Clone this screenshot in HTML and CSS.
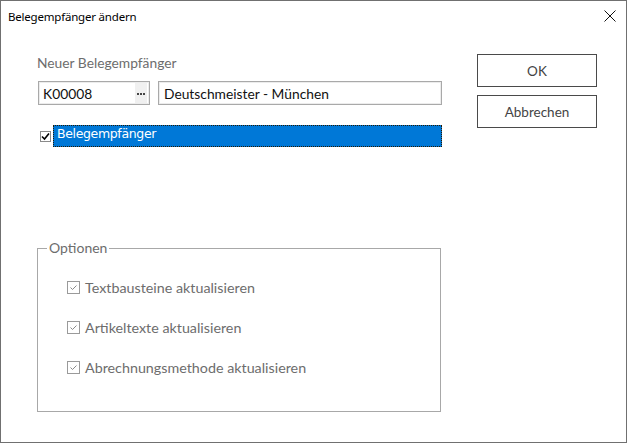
FILE: index.html
```html
<!DOCTYPE html>
<html lang="de">
<head>
<meta charset="utf-8">
<title>Belegempfänger ändern</title>
<link rel="stylesheet" href="styles.css">
</head>
<body>
<div class="window">
  <div class="titlebar">
    <span class="title">Belegempfänger ändern</span>
    <span class="close">
      <svg width="12" height="12" viewBox="0 0 12 12"><path d="M0.5 0.5 L11.5 11.5 M11.5 0.5 L0.5 11.5" stroke="#111" stroke-width="1" fill="none"/></svg>
    </span>
  </div>
  <div class="main">
    <div class="left">
      <div class="label">Neuer Belegempfänger</div>
      <div class="inputs">
        <div class="field code">
          <span class="value">K00008</span>
          <span class="dots"><i></i><i></i><i></i></span>
        </div>
        <div class="field name"><span class="value">Deutschmeister - München</span></div>
      </div>
      <div class="checkrow">
        <span class="cb small">
          <svg width="9" height="9" viewBox="0 0 9 9"><path d="M1 4.5 L3.5 7 L8 1.5" stroke="#000" stroke-width="1.6" fill="none"/></svg>
        </span>
        <span class="selected">Belegempfänger</span>
      </div>
      <fieldset class="group">
        <legend>Optionen</legend>
        <div class="options">
          <div class="opt"><span class="cb"><svg width="11" height="11" viewBox="0 0 11 11"><path d="M2.5 5.5 L4.5 7.5 L8.5 3.5" stroke="#8a8a8a" stroke-width="1" fill="none"/></svg></span><span>Textbausteine aktualisieren</span></div>
          <div class="opt"><span class="cb"><svg width="11" height="11" viewBox="0 0 11 11"><path d="M2.5 5.5 L4.5 7.5 L8.5 3.5" stroke="#8a8a8a" stroke-width="1" fill="none"/></svg></span><span>Artikeltexte aktualisieren</span></div>
          <div class="opt"><span class="cb"><svg width="11" height="11" viewBox="0 0 11 11"><path d="M2.5 5.5 L4.5 7.5 L8.5 3.5" stroke="#8a8a8a" stroke-width="1" fill="none"/></svg></span><span>Abrechnungsmethode aktualisieren</span></div>
        </div>
      </fieldset>
    </div>
    <div class="right">
      <div class="btn">OK</div>
      <div class="btn">Abbrechen</div>
    </div>
  </div>
</div>
</body>
</html>
```
FILE: styles.css
```css
* { box-sizing: border-box; }
html, body { margin: 0; padding: 0; background: #fff; }
body { font-family: Lato, "Noto Sans", sans-serif; font-size: 13px; color: #1a1a1a; }

.window {
  width: 627px;
  height: 443px;
  border: 1px solid #707070;
  background: #fff;
}

.titlebar {
  height: 31px;
  display: flex;
  align-items: center;
  justify-content: space-between;
  padding: 0 10px 0 7px;
}
.title {
  font-family: "Noto Sans", sans-serif;
  font-size: 11.5px;
  color: #000;
  letter-spacing: -0.2px;
}
.close { display: flex; width: 12px; height: 12px; margin-top: -1px; }

.main {
  display: flex;
  padding: 22px 0 0 36px;
}
.left {
  width: 405px;
  padding-top: 1px;
}
.label {
  color: #6d6d6d;
  font-size: 13.8px;
  line-height: 16px;
  height: 16px;
}
.inputs {
  display: flex;
  gap: 8px;
  margin-top: 10px;
  margin-left: 1px;
}
.field {
  height: 24px;
  border: 1px solid #a9a9a9;
  box-shadow: inset 0 0 0 1px #ececec;
  display: flex;
  align-items: center;
  font-size: 13.8px;
  color: #111;
}
.code { width: 112px; padding-left: 4px; justify-content: space-between; padding-right: 2px; }
.name { width: 284px; padding-left: 5px; }
.dots {
  width: 12px;
  height: 20px;
  background: #f0f0f0;
  display: flex;
  justify-content: center;
  align-items: flex-end;
  gap: 1px;
  padding-bottom: 8px;
}
.dots i {
  display: block;
  width: 2px;
  height: 2px;
  background: #444;
}

.checkrow {
  display: flex;
  align-items: center;
  height: 22px;
  margin-top: 20px;
}
.cb {
  width: 13px;
  height: 13px;
  border: 1px solid #9a9a9a;
  background: #fff;
  display: flex;
  align-items: center;
  justify-content: center;
  flex: none;
}
.cb.small { width: 11px; height: 11px; margin-left: 3px; border-color: #8a8a8a; }
.selected {
  margin-left: 2px;
  flex: 1;
  height: 22px;
  background: #0078d7;
  border: 1px dotted #2a1a00;
  color: #fff;
  font-family: "DejaVu Sans", sans-serif;
  font-size: 12.5px;
  line-height: 16px;
  padding-left: 3px;
  letter-spacing: -0.35px;
}

.group {
  margin: 93px 0 0 0;
  padding: 0;
  width: 404px;
  height: 172px;
  border: 1px solid #a8a8a8;
}
.group legend {
  margin-left: 9px;
  padding: 0 2px;
  color: #6d6d6d;
  font-size: 14px;
  line-height: 16px;
}
.options {
  display: flex;
  flex-direction: column;
  gap: 20px;
  padding: 21px 0 0 29px;
}
.opt {
  display: flex;
  align-items: center;
  gap: 5px;
  height: 20px;
  color: #6d6d6d;
  font-size: 14.3px;
}

.right {
  margin-left: 35px;
  display: flex;
  flex-direction: column;
  gap: 8px;
}
.btn {
  width: 120px;
  height: 33px;
  border: 1px solid #4a4a4a;
  display: flex;
  align-items: center;
  justify-content: center;
  color: #444;
  font-size: 13.5px;
  background: #fff;
}
```
